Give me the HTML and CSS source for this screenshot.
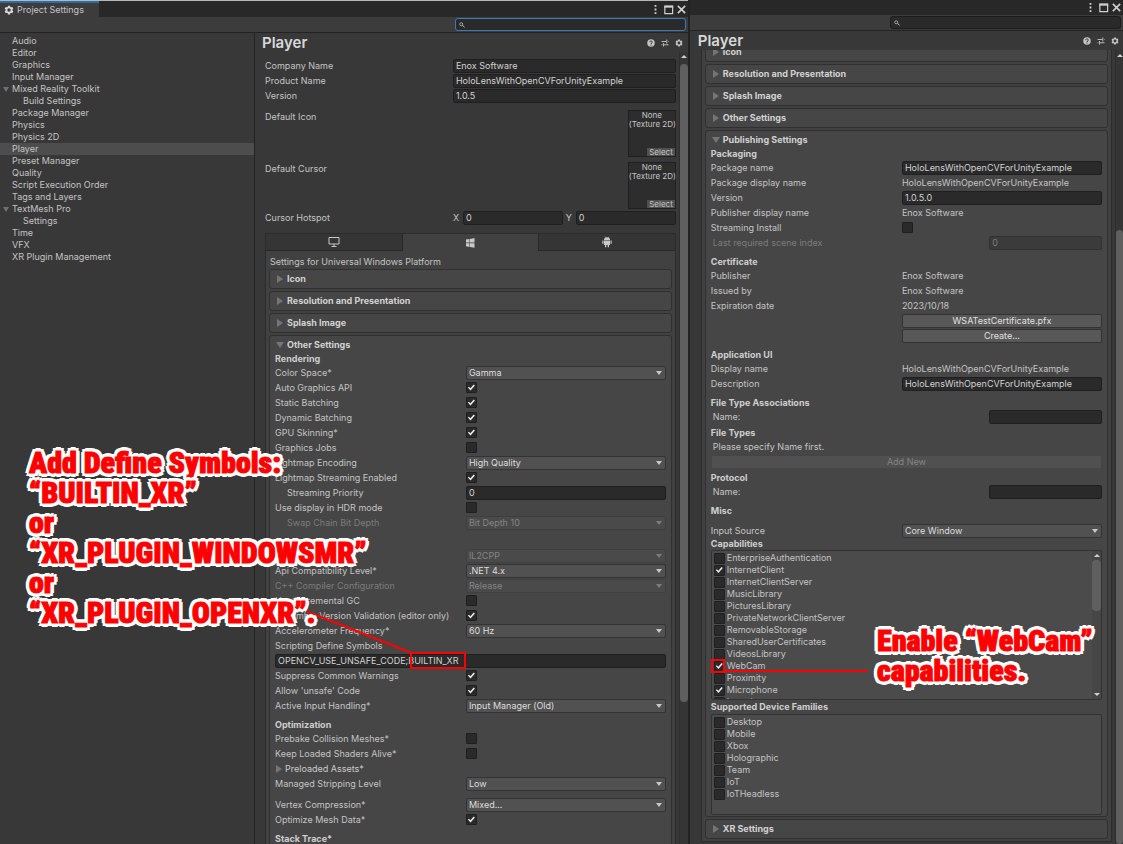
FILE: index.html
```html
<!DOCTYPE html>
<html lang="en">
<head>
<meta charset="utf-8">
<title>Project Settings</title>
<link rel="stylesheet" href="styles.css">
</head>
<body>
<svg class="defs" aria-hidden="true">
  <symbol id="gear" viewBox="0 0 16 16"><path fill="currentColor" fill-rule="evenodd" d="M6.3 1h3.4l.4 2 1.2.7 2-.7 1.6 2.9-1.5 1.4v1.4l1.5 1.4-1.6 2.9-2-.7-1.2.7-.4 2H6.300l-.4-2-1.200-.7-2 .7L1.100 10.100l1.500-1.400V7.300L1.100 5.900 2.700 3l2 .7L5.900 3zM8 5.200a2.800 2.800 0 1 0 0 5.600 2.800 2.800 0 0 0 0-5.600z"/></symbol>
  <symbol id="help" viewBox="0 0 16 16"><circle cx="8" cy="8" r="7.500" fill="currentColor"/><path d="M5.500 6.300c0-3.400 5.200-3.200 5 0C10.400 8 8 8 8 10" fill="none" stroke="#383838" stroke-width="2"/><rect x="7" y="11" width="2" height="2" fill="#383838"/></symbol>
  <symbol id="preset" viewBox="0 0 16 16"><path d="M1 5h10M14 5h1M11.500 1v8M1 11.500h2M6 11.500h9M5 8v7" fill="none" stroke="currentColor" stroke-width="1.800"/></symbol>
  <symbol id="search" viewBox="0 0 16 16"><circle cx="6" cy="6" r="4" fill="none" stroke="currentColor" stroke-width="2"/><path d="M9 9l6 5" stroke="currentColor" stroke-width="2.500"/></symbol>
  <symbol id="dots" viewBox="0 0 12 12"><path fill="currentColor" d="M5 1h2v2H5zM5 5h2v2H5zM5 9h2v2H5z"/></symbol>
  <symbol id="max" viewBox="0 0 12 12"><path d="M2 3v7.500h8.500V3" fill="none" stroke="currentColor" stroke-width="1.300"/><path fill="currentColor" d="M1.300 1.500h9.900v2.500H1.300z"/></symbol>
  <symbol id="close" viewBox="0 0 12 12"><path d="M2 2l8 8M10 2l-8 8" fill="none" stroke="currentColor" stroke-width="1.700"/></symbol>
</svg>
<div class="desk">
  <section class="window main">
    <header class="titlebar">
      <div class="tab"><svg><use href="#gear"/></svg>Project Settings</div>
      <div class="wbtns"><button aria-label="Menu"><svg><use href="#dots"/></svg></button><button aria-label="Maximize"><svg><use href="#max"/></svg></button><button aria-label="Close"><svg><use href="#close"/></svg></button></div>
    </header>
    <div class="toolbar"><label class="search focus"><svg><use href="#search"/></svg><input type="text" aria-label="Search"></label></div>
    <div class="body">
      <nav class="side">
        <a href="#">Audio</a><a href="#">Editor</a><a href="#">Graphics</a><a href="#">Input Manager</a>
        <a href="#" class="open">Mixed Reality Toolkit</a><a href="#" class="sub">Build Settings</a>
        <a href="#">Package Manager</a><a href="#">Physics</a><a href="#">Physics 2D</a><a href="#" class="sel">Player</a>
        <a href="#">Preset Manager</a><a href="#">Quality</a><a href="#">Script Execution Order</a><a href="#">Tags and Layers</a>
        <a href="#" class="open">TextMesh Pro</a><a href="#" class="sub">Settings</a>
        <a href="#">Time</a><a href="#">VFX</a><a href="#">XR Plugin Management</a>
      </nav>
      <main class="pane">
        <div class="head"><h1>Player</h1><div class="hicons"><button aria-label="Help"><svg><use href="#help"/></svg></button><button aria-label="Presets"><svg><use href="#preset"/></svg></button><button aria-label="Settings"><svg><use href="#gear"/></svg></button></div></div>
        <div class="scroll">
          <div class="content">
            <div class="general">
              <div class="row"><label for="co">Company Name</label><input id="co" type="text" value="Enox Software"></div>
              <div class="row"><label for="pr">Product Name</label><input id="pr" type="text" value="HoloLensWithOpenCVForUnityExample"></div>
              <div class="row"><label for="ve">Version</label><input id="ve" type="text" value="1.0.5"></div>
              <div class="texrow"><span>Default Icon</span><div class="tex"><span>None<br>(Texture 2D)</span><button>Select</button></div></div>
              <div class="texrow"><span>Default Cursor</span><div class="tex"><span>None<br>(Texture 2D)</span><button>Select</button></div></div>
              <div class="row"><span class="lab">Cursor Hotspot</span><div class="xy"><label for="hx">X</label><input id="hx" type="text" value="0"><label for="hy">Y</label><input id="hy" type="text" value="0"></div></div>
            </div>
            <div class="platform">
              <div class="tabs">
                <button aria-label="Standalone"><svg viewBox="0 0 12 12"><path d="M1 1.500h10v6.500H1zM6 8v2M3.500 10.500h5" fill="none" stroke="currentColor"/></svg></button>
                <button class="on" aria-label="Universal Windows Platform"><svg viewBox="0 0 12 12"><path fill="currentColor" d="M2 2.600l3.500-.6v3.600H2zM6 1.900l4.500-.8v4.500H6zM2 6.200h3.500v3.700L2 9.300zM6 6.200h4.500v4.600L6 10z"/></svg></button>
                <button aria-label="Android"><svg viewBox="0 0 12 12"><path fill="currentColor" d="M3 4a3 2.800 0 0 1 6 0zM3 4.500h6v4.500H8v2.300H6.700V9H5.300v2.300H4V9H3zM1.300 4.600h1.200v3.200H1.300zM9.500 4.600h1.200v3.200H9.500z"/><path d="M4 .6l.8 1.200M8 .6l-.8 1.200" stroke="currentColor" stroke-width=".6"/></svg></button>
              </div>
              <p class="for">Settings for Universal Windows Platform</p>
              <div class="folds">
                <div class="fold"><h2>Icon</h2></div>
                <div class="fold"><h2>Resolution and Presentation</h2></div>
                <div class="fold"><h2>Splash Image</h2></div>
                <div class="fold exp"><h2>Other Settings</h2>
                  <h3 class="first">Rendering</h3>
                  <div class="row"><label for="a1">Color Space*</label><div class="dd"><select id="a1"><option>Gamma</option></select></div></div>
                  <div class="row"><label for="a2">Auto Graphics API</label><input id="a2" type="checkbox" checked></div>
                  <div class="row"><label for="a3">Static Batching</label><input id="a3" type="checkbox" checked></div>
                  <div class="row"><label for="a4">Dynamic Batching</label><input id="a4" type="checkbox" checked></div>
                  <div class="row"><label for="a5">GPU Skinning*</label><input id="a5" type="checkbox" checked></div>
                  <div class="row"><label for="a6">Graphics Jobs</label><input id="a6" type="checkbox"></div>
                  <div class="row"><label for="a7">Lightmap Encoding</label><div class="dd"><select id="a7"><option>High Quality</option></select></div></div>
                  <div class="row"><label for="a8">Lightmap Streaming Enabled</label><input id="a8" type="checkbox" checked></div>
                  <div class="row ind"><label for="a9">Streaming Priority</label><input id="a9" type="text" value="0"></div>
                  <div class="row"><label for="a10">Use display in HDR mode</label><input id="a10" type="checkbox"></div>
                  <div class="row ind off"><label for="a11">Swap Chain Bit Depth</label><div class="dd"><select id="a11" disabled><option>Bit Depth 10</option></select></div></div>
                  <h3>Configuration</h3>
                  <div class="row off"><label for="b1">Scripting Backend</label><div class="dd"><select id="b1" disabled><option>IL2CPP</option></select></div></div>
                  <div class="row"><label for="b2">Api Compatibility Level*</label><div class="dd"><select id="b2"><option>.NET 4.x</option></select></div></div>
                  <div class="row off"><label for="b3">C++ Compiler Configuration</label><div class="dd"><select id="b3" disabled><option>Release</option></select></div></div>
                  <div class="row"><label for="b4">Use incremental GC</label><input id="b4" type="checkbox"></div>
                  <div class="row"><label for="b5">Assembly Version Validation (editor only)</label><input id="b5" type="checkbox" checked></div>
                  <div class="row"><label for="b6">Accelerometer Frequency*</label><div class="dd"><select id="b6"><option>60 Hz</option></select></div></div>
                  <div class="row"><label for="b7">Scripting Define Symbols</label></div>
                  <div class="row full"><input id="b7" type="text" value="OPENCV_USE_UNSAFE_CODE;BUILTIN_XR"></div>
                  <div class="row"><label for="b8">Suppress Common Warnings</label><input id="b8" type="checkbox" checked></div>
                  <div class="row"><label for="b9">Allow 'unsafe' Code</label><input id="b9" type="checkbox" checked></div>
                  <div class="row"><label for="b10">Active Input Handling*</label><div class="dd"><select id="b10"><option>Input Manager (Old)</option></select></div></div>
                  <h3>Optimization</h3>
                  <div class="row"><label for="c1">Prebake Collision Meshes*</label><input id="c1" type="checkbox"></div>
                  <div class="row"><label for="c2">Keep Loaded Shaders Alive*</label><input id="c2" type="checkbox"></div>
                  <div class="row"><span class="lab closed">Preloaded Assets*</span></div>
                  <div class="row"><label for="c3">Managed Stripping Level</label><div class="dd"><select id="c3"><option>Low</option></select></div></div>
                  <div class="row gap"><label for="c4">Vertex Compression*</label><div class="dd"><select id="c4"><option>Mixed...</option></select></div></div>
                  <div class="row"><label for="c5">Optimize Mesh Data*</label><input id="c5" type="checkbox" checked></div>
                  <h3>Stack Trace*</h3>
                  <div class="row"></div>
                </div>
              </div>
            </div>
          </div>
          <div class="bar"><i class="up"></i><div class="thumb"></div></div>
        </div>
      </main>
    </div>
  </section>

  <section class="window second">
    <header class="titlebar"><div class="wbtns"><button aria-label="Menu"><svg><use href="#dots"/></svg></button><button aria-label="Maximize"><svg><use href="#max"/></svg></button><button aria-label="Close"><svg><use href="#close"/></svg></button></div></header>
    <div class="toolbar"><label class="search"><svg><use href="#search"/></svg><input type="text" aria-label="Search"></label></div>
    <div class="pane">
      <div class="head"><h1>Player</h1><div class="hicons"><button aria-label="Help"><svg><use href="#help"/></svg></button><button aria-label="Presets"><svg><use href="#preset"/></svg></button><button aria-label="Settings"><svg><use href="#gear"/></svg></button></div></div>
      <div class="scroll">
        <div class="content">
          <div class="platform">
            <div class="folds">
              <div class="fold"><h2>Icon</h2></div>
              <div class="fold"><h2>Resolution and Presentation</h2></div>
              <div class="fold"><h2>Splash Image</h2></div>
              <div class="fold"><h2>Other Settings</h2></div>
              <div class="fold exp"><h2>Publishing Settings</h2>
                <h3 class="first">Packaging</h3>
                <div class="row"><label for="d1">Package name</label><input id="d1" type="text" value="HoloLensWithOpenCVForUnityExample"></div>
                <div class="row"><span class="lab">Package display name</span><span>HoloLensWithOpenCVForUnityExample</span></div>
                <div class="row"><label for="d2">Version</label><input id="d2" type="text" value="1.0.5.0"></div>
                <div class="row"><span class="lab">Publisher display name</span><span>Enox Software</span></div>
                <div class="row"><label for="d3">Streaming Install</label><input id="d3" type="checkbox"></div>
                <div class="row half off"><label for="d4">Last required scene index</label><input id="d4" type="text" value="0" disabled></div>
                <h3>Certificate</h3>
                <div class="row"><span class="lab">Publisher</span><span>Enox Software</span></div>
                <div class="row"><span class="lab">Issued by</span><span>Enox Software</span></div>
                <div class="row"><span class="lab">Expiration date</span><span>2023/10/18</span></div>
                <div class="row"><span class="lab"></span><button class="btn">WSATestCertificate.pfx</button></div>
                <div class="row"><span class="lab"></span><button class="btn">Create...</button></div>
                <h3>Application UI</h3>
                <div class="row"><span class="lab">Display name</span><span>HoloLensWithOpenCVForUnityExample</span></div>
                <div class="row"><label for="e1">Description</label><input id="e1" type="text" value="HoloLensWithOpenCVForUnityExample"></div>
                <h3>File Type Associations</h3>
                <div class="row half"><label for="e2">Name:</label><input id="e2" type="text"></div>
                <h3 class="near">File Types</h3>
                <div class="row half"><span class="lab">Please specify Name first.</span></div>
                <div class="row full"><button class="btn" disabled>Add New</button></div>
                <h3 class="near">Protocol</h3>
                <div class="row half"><label for="e3">Name:</label><input id="e3" type="text"></div>
                <h3>Misc</h3>
                <div class="row gap"><label for="e4">Input Source</label><div class="dd"><select id="e4"><option>Core Window</option></select></div></div>
                <h3 class="first">Capabilities</h3>
                <div class="list caps">
                  <div class="items">
                    <label><input type="checkbox">EnterpriseAuthentication</label>
                    <label><input type="checkbox" checked>InternetClient</label>
                    <label><input type="checkbox">InternetClientServer</label>
                    <label><input type="checkbox">MusicLibrary</label>
                    <label><input type="checkbox">PicturesLibrary</label>
                    <label><input type="checkbox">PrivateNetworkClientServer</label>
                    <label><input type="checkbox">RemovableStorage</label>
                    <label><input type="checkbox">SharedUserCertificates</label>
                    <label><input type="checkbox">VideosLibrary</label>
                    <label><input type="checkbox" checked>WebCam</label>
                    <label><input type="checkbox">Proximity</label>
                    <label><input type="checkbox" checked>Microphone</label>
                    <label><input type="checkbox">Location</label>
                  </div>
                  <div class="bar"><i class="up"></i><div class="thumb"></div><i class="down"></i></div>
                </div>
                <h3 class="first">Supported Device Families</h3>
                <div class="list fams">
                  <div class="items">
                    <label><input type="checkbox">Desktop</label>
                    <label><input type="checkbox">Mobile</label>
                    <label><input type="checkbox">Xbox</label>
                    <label><input type="checkbox">Holographic</label>
                    <label><input type="checkbox">Team</label>
                    <label><input type="checkbox">IoT</label>
                    <label><input type="checkbox">IoTHeadless</label>
                  </div>
                </div>
              </div>
              <div class="fold"><h2>XR Settings</h2></div>
            </div>
          </div>
        </div>
        <div class="bar"><i class="up"></i><div class="thumb"></div></div>
      </div>
    </div>
  </section>

  <svg class="marks" width="1123" height="844" viewBox="0 0 1123 844" fill="none" stroke="#ff0000" stroke-width="2" aria-hidden="true">
    <path d="M306 611L412 653M411 653h54v15h-54zM712 660h12v12h-12zM724 671h144"/>
  </svg>
  <p class="note define">Add Define Symbols:<br>“BUILTIN_XR”<br>or<br>“XR_PLUGIN_WINDOWSMR”<br>or<br>“XR_PLUGIN_OPENXR”.</p>
  <p class="note webcam">Enable “WebCam”<br>capabilities.</p>
</div>
</body>
</html>
```
FILE: styles.css
```css
* { box-sizing: border-box; }
body { margin: 0; background: #383838; color: #c4c4c4; font: 9px/12px Inter, "Liberation Sans", sans-serif; }
h1, h2, h3, p { margin: 0; }
button, input, select { font: inherit; color: inherit; margin: 0; padding: 0; border: 0; background: none; }
svg { display: block; }
.defs { position: absolute; width: 0; height: 0; }
.desk { position: relative; display: flex; height: 100vh; overflow: hidden; }
.window { display: flex; flex-direction: column; min-width: 0; background: #383838; }
.main { flex: 689 1 0; border-top: 1px solid #b4b8b6; }
.second { flex: 434 1 0; border-left: 2px solid #232323; }

.titlebar { display: flex; justify-content: space-between; flex: none; height: 16px; background: #282828; }
.second .titlebar { height: 15px; justify-content: flex-end; }
.tab { display: flex; align-items: center; gap: 3px; width: 99px; padding-left: 4px; background: #3c3c3c; border-top: 2px solid #2c6ba8; white-space: nowrap; }
.tab svg { width: 10px; height: 10px; color: #d8d8d8; }
.wbtns { display: flex; align-items: center; gap: 2px; padding-right: 1px; color: #d0d0d0; }
.wbtns svg { width: 11px; height: 11px; }
.toolbar { display: flex; justify-content: flex-end; align-items: center; flex: none; height: 16px; padding-right: 2px; background: #3c3c3c; border-bottom: 1px solid #232323; }
.search { display: flex; align-items: center; width: 231px; height: 13px; padding-left: 3px; border: 1px solid #1c1c1c; border-radius: 3px; background: #2a2a2a; }
.search.focus { border-color: #3a79bb; }
.search svg { width: 6px; height: 6px; flex: none; }
.search input { flex: 1; min-width: 0; height: 10px; outline: 0; }

.body { display: flex; flex: 1; min-height: 0; }
.side { flex: none; width: 255px; padding-top: 2px; border-right: 1px solid #232323; }
.side a { position: relative; display: block; height: 12px; padding-left: 12px; color: inherit; text-decoration: none; }
.side .sub { padding-left: 23px; }
.side .sel { background: #4d4d4d; }
.side .open::before { content: ""; position: absolute; left: 3px; top: 4px; border: 3px solid transparent; border-top: 5px solid #707070; border-bottom: 0; }

.pane { display: flex; flex-direction: column; flex: 1; min-width: 0; min-height: 0; }
.head { display: flex; align-items: center; justify-content: space-between; flex: none; height: 19px; padding: 0 5px 0 7px; }
.second .head { padding: 0 4px 0 8px; }
h1 { font-size: 15px; line-height: 19px; font-weight: 600; color: #d8d8d8; }
.hicons { display: flex; gap: 6px; color: #c4c4c4; }
.hicons svg { width: 8px; height: 8px; }
.scroll { display: flex; flex: 1; min-height: 0; overflow: hidden; }
.content { flex: 1; min-width: 0; }
.bar { display: flex; flex-direction: column; flex: none; width: 9px; background: #353535; border-left: 1px solid #2e2e2e; }
.thumb { height: 638px; border-radius: 4px; background: #5f5f5f; }
.up { margin: 3px auto 6px; border: 3px solid transparent; border-bottom: 3px solid #d0d0d0; border-top: 0; }
.main .content { padding: 6px 3px 0 10px; }
.second .content { padding: 0 3px 0 11px; }
.second .scroll > .bar { width: 8px; padding-top: 1px; }
.second .scroll > .bar .thumb { height: 614px; margin-top: 167px; }

.row { display: grid; grid-template-columns: 191fr 200fr; align-items: center; height: 15px; white-space: nowrap; }
.row.full { grid-template-columns: 1fr; }
.row.half { grid-template-columns: 279fr 113fr; }
.row.half > :first-child { padding-left: 2px; }
.row.ind > :first-child { padding-left: 12px; }
.row.gap { margin-top: 6px; }
.off { color: #7c7c7c; }
.general .row { grid-template-columns: 188fr 223fr; }
input[type="text"] { width: 100%; min-width: 0; }
.row input[type="text"] { height: 14px; padding: 0 2px; background: #2a2a2a; border: 1px solid #1f1f1f; border-radius: 2px; color: #d2d2d2; line-height: 12px; }
.row input[type="text"]:disabled { background: #3b3b3b; border-color: #323232; color: #7c7c7c; }
input[type="checkbox"] { position: relative; appearance: none; width: 11px; height: 11px; background: #2a2a2a; border: 1px solid #1f1f1f; border-radius: 1px; }
input[type="checkbox"]:checked::after { content: ""; position: absolute; inset: 1px; background: #eeeeee; clip-path: polygon(0 50%, 14% 38%, 36% 62%, 84% 8%, 100% 20%, 38% 92%); }
.dd { position: relative; height: 14px; }
.dd select { display: block; appearance: none; width: 100%; height: 14px; padding: 0 2px; background: #515151; border: 1px solid #333333; border-radius: 2px; color: #dedede; line-height: 12px; opacity: 1; }
.dd::after { content: ""; position: absolute; right: 4px; top: 5px; border: 3px solid transparent; border-top: 4px solid #c8c8c8; border-bottom: 0; pointer-events: none; }
.off .dd select { background: #4a4a4a; border-color: #3f3f3f; color: #858585; }
.off .dd::after { border-top-color: #7c7c7c; }
.btn { width: 100%; height: 14px; background: #585858; border: 1px solid #333333; border-radius: 2px; color: #e0e0e0; line-height: 12px; }
.btn:disabled { background: #505050; border-color: #454545; color: #858585; }

.texrow { display: flex; justify-content: space-between; margin-top: 5px; }
.row + .texrow { margin-top: 7px; }
.texrow > span { line-height: 14px; }
.tex { display: flex; flex-direction: column; justify-content: space-between; width: 48px; height: 47px; background: #2d2d2d; border: 1px solid #202020; font-size: 8px; line-height: 9px; text-align: center; white-space: nowrap; }
.tex button { align-self: flex-end; height: 8px; padding: 0 2px; background: #505050; line-height: 8px; }
.general .texrow + .row { margin-top: 1px; }
.xy { display: grid; grid-template-columns: 7px 1fr 7px 1fr; column-gap: 3px; align-items: center; }

.platform { background: #414141; border: 1px solid #2c2c2c; }
.main .platform { margin-top: 8px; border-bottom: 0; }
.second .platform { margin-top: -8px; border-top: 0; }
.tabs { display: grid; grid-template-columns: 1fr 1fr 1fr; height: 17px; }
.tabs button { display: flex; align-items: center; justify-content: center; background: #353535; border: solid #282828; border-width: 0 0 1px; color: #c8c8c8; }
.tabs .on { background: #414141; border-width: 0 1px; }
.tabs svg { width: 12px; height: 12px; }
.for { padding: 4px 4px 1px; line-height: 13px; }
.folds { display: flex; flex-direction: column; gap: 2px; padding: 0 3px 2px; }
.fold { padding: 0 5px; background: #464646; border: 1px solid #303030; border-radius: 3px; }
.exp { padding-bottom: 1px; }
h2 { position: relative; padding-left: 12px; font-size: 9px; line-height: 18px; font-weight: 700; color: #d2d2d2; }
.exp h2 { line-height: 17px; }
h2::before, .closed::before { content: ""; position: absolute; left: 2px; top: 5px; border: 4px solid transparent; border-left: 6px solid #757575; border-right: 0; }
.exp h2::before { left: 1px; top: 6px; border: 4px solid transparent; border-top: 6px solid #757575; border-bottom: 0; }
.closed { position: relative; padding-left: 10px; color: #cccccc; }
.closed::before { left: 1px; top: 2px; }
h3 { margin-top: 6px; font-size: 9px; line-height: 12px; font-weight: 700; color: #cecece; }
h3.first { margin-top: 0; }
h3.near { margin-top: 3px; }

.list { display: flex; background: #4b4b4b; border: 1px solid #323232; border-radius: 2px; overflow: hidden; }
.caps { height: 150px; margin-bottom: 1px; }
.fams { height: 101px; margin-top: 1px; }
.items { flex: 1; padding: 1px 2px; }
.items label { display: flex; align-items: center; gap: 2px; height: 12px; }
.list .bar { background: #464646; border: 0; }
.list .up { margin: 3px auto 3px; }
.list .thumb { height: 51px; }
.down { margin: auto auto 3px; border: 3px solid transparent; border-top: 3px solid #d0d0d0; border-bottom: 0; }

.marks { position: absolute; left: 0; top: 0; pointer-events: none; }
.note { position: absolute; color: #ff0000; font: 900 30px/30px Impact, "Roboto Condensed", Roboto, sans-serif; white-space: nowrap; -webkit-text-stroke: 1px #ff0000; pointer-events: none;
  text-shadow: 4px 0 #fff, -4px 0 #fff, 0 4px #fff, 0 -4px #fff, 3px 3px #fff, -3px 3px #fff, 3px -3px #fff, -3px -3px #fff, 2px 0 #fff, -2px 0 #fff; }
.define { left: 29px; top: 448px; }
.webcam { left: 877px; top: 626px; }
```
